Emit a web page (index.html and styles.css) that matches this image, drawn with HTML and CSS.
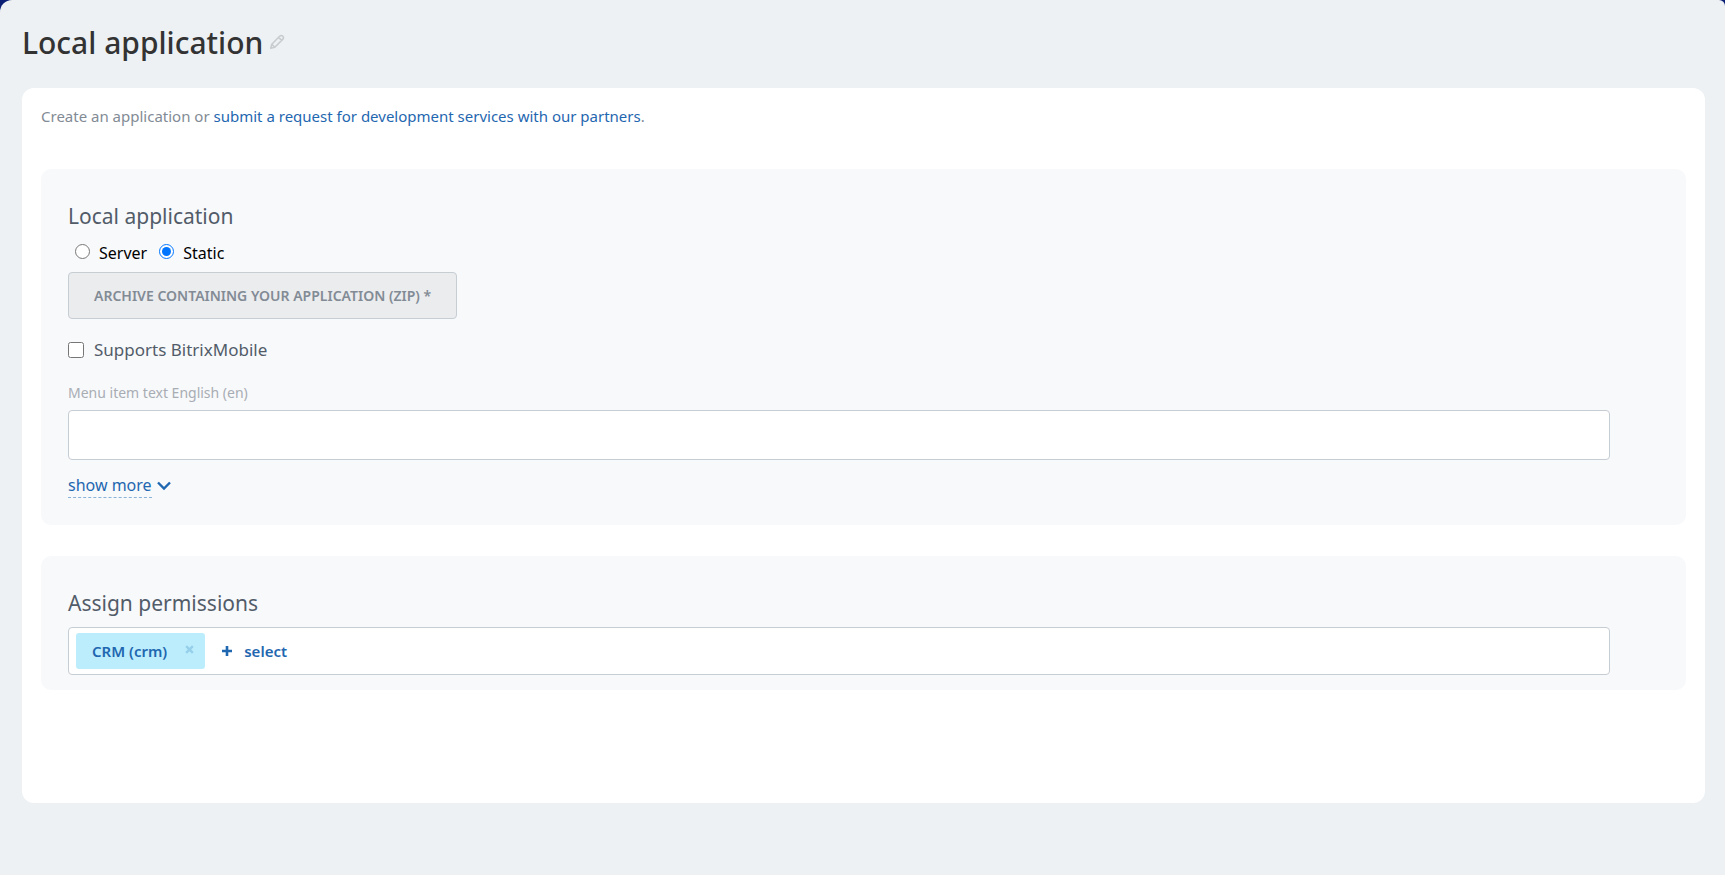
FILE: index.html
```html
<!DOCTYPE html>
<html lang="en">
<head>
<meta charset="utf-8">
<title>Local application</title>
<link rel="stylesheet" href="styles.css">
</head>
<body>
<div class="page">
  <header class="page-header">
    <h1 class="page-title">Local application</h1>
    <button class="edit-button" type="button" aria-label="Edit title">
      <svg width="16" height="16" viewBox="0 0 16 16" fill="none" stroke="#c9cccf" stroke-width="1.6" stroke-linejoin="round"><path d="M1.8 14.2 2.8 10.2 10.6 2.3Q12.2 .8 13.8 2.2 15.2 3.8 13.7 5.4L5.8 13.2ZM9.6 3.4 12.6 6.4M2.8 10.2 5.8 13.2"/></svg>
    </button>
  </header>
  <main class="card">
    <p class="intro">Create an application or <a class="link" href="#">submit a request for development services with our partners</a>.</p>
    <section class="section">
      <h2 class="section-title">Local application</h2>
      <div class="radios">
        <label class="radio"><input class="radio-input" type="radio" name="kind"><span>Server</span></label>
        <label class="radio"><input class="radio-input" type="radio" name="kind" checked><span>Static</span></label>
      </div>
      <button class="upload" type="button">ARCHIVE CONTAINING YOUR APPLICATION (ZIP) *</button>
      <label class="check"><input class="check-input" type="checkbox"><span>Supports BitrixMobile</span></label>
      <label class="field-label" for="menu-text">Menu item text English (en)</label>
      <input class="field" id="menu-text" type="text">
      <a class="more" href="#"><span class="more-text">show more</span><svg width="14" height="10" viewBox="0 0 14 10" fill="none" stroke="#1f67b0" stroke-width="2.4"><path d="M1 1.5 7 7.5 13 1.5"/></svg></a>
    </section>
    <section class="section section-permissions">
      <h2 class="section-title">Assign permissions</h2>
      <div class="tags">
        <span class="tag">CRM (crm)<button class="tag-remove" type="button" aria-label="Remove CRM (crm)"><svg width="9" height="9" viewBox="0 0 10 10" stroke="#95cfea" stroke-width="2.6"><path d="M1.3 1.3 8.7 8.7M8.7 1.3 1.3 8.7"/></svg></button></span>
        <button class="select" type="button"><svg width="10" height="10" viewBox="0 0 10 10" stroke="#1f67b0" stroke-width="2.6"><path d="M5 0V10M0 5H10"/></svg>select</button>
      </div>
    </section>
  </main>
</div>
</body>
</html>
```
FILE: styles.css
```css
* { box-sizing: border-box; }

body {
  margin: 0;
  background: #0b1f75;
  font-family: "Noto Sans", "Open Sans", sans-serif;
  font-size: 16px;
  color: #525c69;
}

button { font-family: inherit; cursor: pointer; }

.page {
  min-height: 100vh;
  padding: 20px 20px 40px 22px;
  background: #edf1f4;
  border-radius: 12px 6px 0 0;
}

.page-header {
  display: flex;
  align-items: center;
  gap: 6px;
  height: 46px;
  margin-bottom: 22px;
}

.page-title {
  margin: 0;
  font-size: 30px;
  font-weight: 500;
  line-height: 46px;
  color: #333;
}

.edit-button {
  display: flex;
  padding: 0 0 2px;
  border: 0;
  background: none;
}

.card {
  min-height: 715px;
  padding: 16px 19px;
  background: #fff;
  border-radius: 12px;
}

.intro {
  margin: 0 0 41px;
  font-size: 15px;
  line-height: 24px;
  color: #828b95;
}

.link { color: #1f67b0; text-decoration: none; }

.section {
  display: flex;
  flex-direction: column;
  align-items: flex-start;
  padding: 32px 76px 27px 27px;
  background: #f8f9fb;
  border-radius: 10px;
}

.section-permissions {
  margin-top: 31px;
  padding-bottom: 15px;
}

.section-title {
  margin: 0;
  font-size: 21px;
  font-weight: 400;
  line-height: 30px;
  color: #525c69;
}

.radios {
  display: flex;
  gap: 12px;
  padding: 8px 0 4px 7px;
}

.radio {
  display: flex;
  gap: 9px;
  line-height: 29px;
  color: #000;
}

.radio-input {
  width: 15px;
  height: 15px;
  margin: 5px 0 0;
}

.upload {
  height: 47px;
  padding: 0 25px;
  border: 1px solid #c6cdd3;
  border-radius: 4px;
  background: #ebecee;
  font-size: 14px;
  font-weight: 600;
  color: #828b95;
}

.check {
  display: flex;
  align-items: center;
  gap: 10px;
  margin-top: 18px;
  font-size: 17px;
  line-height: 26px;
}

.check-input {
  width: 16px;
  height: 16px;
  margin: 0;
}

.field-label {
  margin-top: 20px;
  font-size: 14px;
  line-height: 20px;
  color: #a8adb4;
}

.field {
  width: 100%;
  height: 50px;
  margin-top: 7px;
  padding: 0 12px;
  border: 1px solid #c6cdd3;
  border-radius: 4px;
  background: #fff;
  font: inherit;
}

.more {
  display: flex;
  align-items: center;
  gap: 5px;
  margin-top: 14px;
  font-size: 16px;
  line-height: 23px;
  color: #1f67b0;
  text-decoration: none;
}

.more-text { border-bottom: 1px dashed #8bb3d8; }

.tags {
  display: flex;
  align-items: center;
  gap: 17px;
  width: 100%;
  min-height: 48px;
  margin-top: 9px;
  padding: 5px 7px;
  border: 1px solid #c6cdd3;
  border-radius: 4px;
  background: #fff;
}

.tag {
  display: flex;
  align-items: center;
  gap: 18px;
  height: 36px;
  padding: 0 11px 0 16px;
  border-radius: 3px;
  background: #bcedfc;
  font-size: 15px;
  font-weight: 600;
  color: #1f67b0;
}

.tag-remove {
  display: flex;
  padding: 0 0 4px;
  border: 0;
  background: none;
}

.select {
  display: flex;
  align-items: center;
  gap: 12px;
  padding: 0;
  border: 0;
  background: none;
  font-size: 15px;
  font-weight: 600;
  color: #1f67b0;
}
```
